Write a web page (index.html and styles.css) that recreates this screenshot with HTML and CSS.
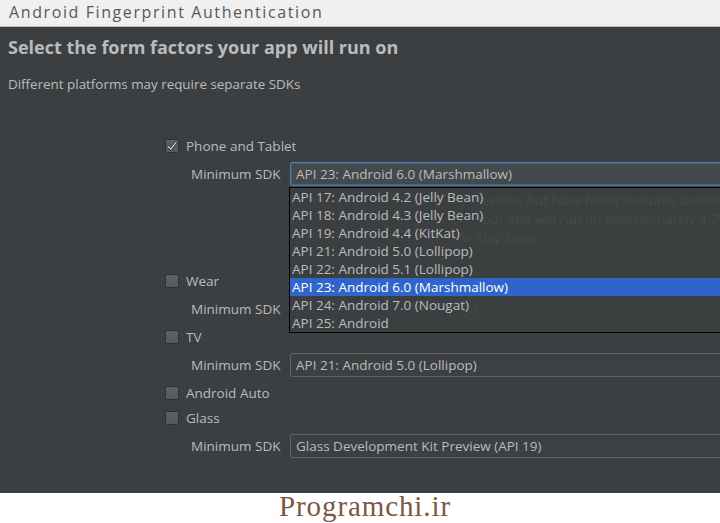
FILE: index.html
```html
<!DOCTYPE html>
<html lang="en">
<head>
  <meta charset="UTF-8">
  <meta name="viewport" content="width=device-width, initial-scale=1.0">
  <title>Android Fingerprint Authentication</title>
  <link rel="stylesheet" href="styles.css">
</head>
<body>
  <div class="titlebar">Android Fingerprint Authentication</div>

  <div class="panel">
    <h1>Select the form factors your app will run on</h1>
    <p class="subtitle">Different platforms may require separate SDKs</p>

    <div class="factors">
      <!-- Phone and Tablet: selected, with the SDK popup open -->
      <label class="check-row">
        <span class="box checked">
          <svg width="12" height="12" viewBox="0 0 12 12"><path d="M2 6.2 L4.8 9 L10.2 2.2" fill="none" stroke="#1e1f20" stroke-width="2.6" stroke-linecap="round" stroke-linejoin="round"/><path d="M2 6.2 L4.8 9 L10.2 2.2" fill="none" stroke="#d0d0d0" stroke-width="1.3" stroke-linecap="round" stroke-linejoin="round"/></svg>
        </span>
        Phone and Tablet
      </label>
      <div class="sdk-row">
        <span class="sdk-label">Minimum SDK</span>
        <div class="combo-wrap">
          <div class="combo focused">API 23: Android 6.0 (Marshmallow)</div>
          <ul class="popup">
            <li><span>API 17: Android 4.2 (Jelly Bean)</span></li>
            <li><span>API 18: Android 4.3 (Jelly Bean)</span></li>
            <li><span>API 19: Android 4.4 (KitKat)</span></li>
            <li><span>API 21: Android 5.0 (Lollipop)</span></li>
            <li><span>API 22: Android 5.1 (Lollipop)</span></li>
            <li class="selected"><span>API 23: Android 6.0 (Marshmallow)</span></li>
            <li><span>API 24: Android 7.0 (Nougat)</span></li>
            <li><span>API 25: Android</span></li>
          </ul>
        </div>
      </div>
      <p class="sdk-note">
        Lower API levels target more devices, but have fewer features available.<br>
        By targeting API 23 and later, your app will run on approximately 4.7% of the devices<br>
        that are active on the Google Play Store.
      </p>

      <label class="check-row"><span class="box"></span>Wear</label>
      <div class="sdk-row">
        <span class="sdk-label">Minimum SDK</span>
        <div class="combo-wrap"><div class="combo">API 21: Android 5.0 (Lollipop)</div></div>
      </div>

      <label class="check-row"><span class="box"></span>TV</label>
      <div class="sdk-row">
        <span class="sdk-label">Minimum SDK</span>
        <div class="combo-wrap"><div class="combo">API 21: Android 5.0 (Lollipop)</div></div>
      </div>

      <label class="check-row"><span class="box"></span>Android Auto</label>

      <label class="check-row"><span class="box"></span>Glass</label>
      <div class="sdk-row">
        <span class="sdk-label">Minimum SDK</span>
        <div class="combo-wrap"><div class="combo">Glass Development Kit Preview (API 19)</div></div>
      </div>
    </div>
  </div>

  <div class="footer">Programchi.ir</div>
</body>
</html>
```

FILE: styles.css
```css
body {
  margin: 0;
  width: 720px;
  height: 523px;
  overflow: hidden;
  background-color: #ffffff;
  font-family: "Open Sans", "Noto Sans", sans-serif;
}
.titlebar {
  height: 26px;
  line-height: 25px;
  padding-left: 9px;
  background-color: #f0f0f0;
  border-bottom: 1px solid #b8b8b8;
  color: #585858;
  font-size: 16px;
  letter-spacing: 1.6px;
}
.panel {
  height: 466px;
  padding-top: 7px;
  box-sizing: border-box;
  background-color: #3c3f41;
  color: #bbbbbb;
  overflow: hidden;
}
h1 {
  margin: 0;
  padding-left: 8px;
  font-size: 18px;
  font-weight: bold;
  line-height: 26px;
}
.subtitle {
  margin: 15px 0 0;
  padding-left: 8px;
  font-size: 13.4px;
  line-height: 18px;
}
.factors {
  margin-top: 40px;
  font-size: 13.5px;
}
.check-row {
  display: flex;
  align-items: center;
  height: 25px;
  padding-left: 165px;
}
.box {
  flex-shrink: 0;
  width: 12px;
  height: 12px;
  margin-right: 7px;
  border: 1px solid #2e3032;
  border-radius: 2px;
  background: linear-gradient(#5f6264, #55585a);
  display: flex;
  align-items: center;
  justify-content: center;
}
.sdk-row {
  display: flex;
  align-items: center;
  height: 31px;
  padding-left: 191px;
}
.sdk-label {
  flex-shrink: 0;
  width: 99px;
  white-space: nowrap;
}
.combo-wrap {
  position: relative;
  flex-shrink: 0;
}
.combo {
  width: 460px;
  height: 22px;
  line-height: 22px;
  padding-left: 5px;
  border: 1px solid #5f6263;
  border-radius: 2px;
  background-color: #3d4042;
  white-space: nowrap;
}
.combo.focused {
  border-color: #4d7fae;
  box-shadow: inset 0 0 0 1px #3e5e7e;
  background-color: #45494a;
}
.popup {
  position: absolute;
  top: 25px;
  left: -1px;
  width: 460px;
  margin: 0;
  padding: 0;
  list-style: none;
  border: 1px solid #000000;
  background-color: rgba(60, 63, 65, 0.93);
  z-index: 2;
}
.popup li {
  height: 18px;
  line-height: 18px;
  padding-left: 2px;
  white-space: nowrap;
}
.popup li span {
  display: inline-block;
  background-color: #3c3f41;
}
.popup li.selected {
  background-color: #2f65ca;
  color: #ffffff;
}
.popup li.selected span {
  background-color: transparent;
}
.sdk-note {
  height: 57px;
  margin: 2px 0 20px 290px;
  line-height: 19px;
  color: #bbbbbb;
  white-space: nowrap;
}
.footer {
  height: 30px;
  padding-left: 10px;
  line-height: 26px;
  text-align: center;
  font-family: "Liberation Serif", serif;
  font-size: 29px;
  letter-spacing: 0.9px;
  color: #7a5843;
}
```
